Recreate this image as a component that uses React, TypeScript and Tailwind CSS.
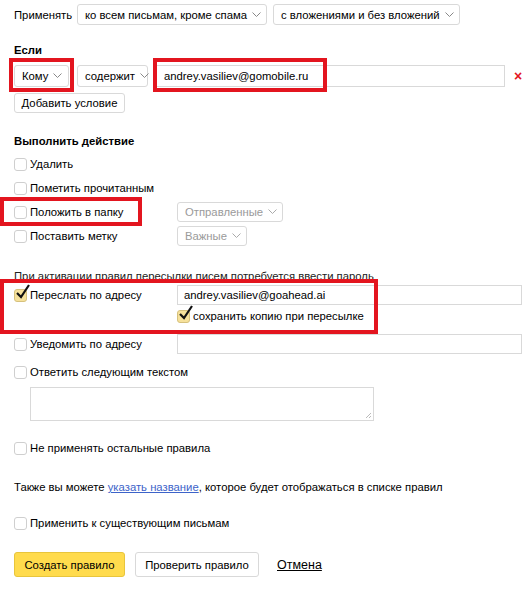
import React from "react";

function Chevron({ gray }: { gray?: boolean }) {
  return (
    <svg width="9" height="6" viewBox="0 0 9 6" className="ml-[5px] shrink-0">
      <polyline points="0.5,0.5 4.5,4.5 8.5,0.5" fill="none" stroke={gray ? "#aaa" : "#888"} strokeWidth="1" />
    </svg>
  );
}

function Select({ label, w, disabled }: { label: string; w: number; disabled?: boolean }) {
  return (
    <div
      className={`flex h-full items-center justify-between rounded-[3px] border border-[#d9d9d9] bg-white pl-[7px] pr-[6px] ${disabled ? "text-[#9a9a9a]" : "text-black"}`}
      style={{ width: w }}
    >
      <span className="whitespace-nowrap">{label}</span>
      <Chevron gray={disabled} />
    </div>
  );
}

function Box({ checked }: { checked?: boolean }) {
  return (
    <span className="relative inline-block h-[13px] w-[13px] shrink-0">
      <span
        className={`absolute inset-0 rounded-[3px] border ${checked ? "border-[#d6c17d] bg-[#f6e19b]" : "border-[#cfcfcf] bg-white"}`}
      />
      {checked && (
        <svg width="16" height="16" viewBox="0 0 16 16" className="absolute left-[1px] top-[-5px]">
          <polyline points="2,9 6,13 14,1" fill="none" stroke="#111" strokeWidth="2.2" strokeLinejoin="miter" />
        </svg>
      )}
    </span>
  );
}

function Check({ label, checked }: { label: string; checked?: boolean }) {
  return (
    <div className="flex items-center gap-[3px]">
      <Box checked={checked} />
      <span className="whitespace-nowrap">{label}</span>
    </div>
  );
}

function RedBox({ l, t, w, h }: { l: number; t: number; w: number; h: number }) {
  return (
    <div
      className="pointer-events-none absolute border-[4px] border-[#e3151f]"
      style={{ left: l, top: t, width: w, height: h }}
    />
  );
}

export default function App() {
  return (
    <div
      className="relative h-[594px] w-[529px] overflow-hidden bg-white pl-[14px] text-[11.3px] leading-[16px] text-black"
      style={{ fontFamily: "'Liberation Sans', Arial, sans-serif" }}
    >
      {/* Применять */}
      <div className="mt-[4px] flex h-[21px] items-center">
        <span className="w-[63px]">Применять</span>
        <Select label="ко всем письмам, кроме спама" w={190} />
        <div className="w-[6px]" />
        <Select label="с вложениями и без вложений" w={187} />
      </div>

      <div className="mt-[17px] font-bold">Если</div>

      {/* condition */}
      <div className="mt-[7px] flex h-[22px] items-center">
        <Select label="Кому" w={55} />
        <div className="w-[8px]" />
        <Select label="содержит" w={71} />
        <div className="w-[7px]" />
        <div className="flex h-full w-[350px] items-center border border-[#d9d9d9] pl-[8px]">
          andrey.vasiliev@gomobile.ru
        </div>
        <span className="ml-[9px] text-[14px] font-bold text-[#e3151f]">×</span>
      </div>

      <button className="mt-[6px] flex h-[20px] w-[111px] items-center justify-center whitespace-nowrap rounded-[3px] border border-[#d9d9d9] bg-white">
        Добавить условие
      </button>

      <div className="mt-[20px] font-bold">Выполнить действие</div>

      <div className="mt-[7px] flex h-[16px] items-center">
        <Check label="Удалить" />
      </div>
      <div className="mt-[8px] flex h-[16px] items-center">
        <Check label="Пометить прочитанным" />
      </div>
      <div className="mt-[6px] flex h-[20px] items-center">
        <div className="w-[163px]">
          <Check label="Положить в папку" />
        </div>
        <Select label="Отправленные" w={106} disabled />
      </div>
      <div className="mt-[4px] flex h-[20px] items-center">
        <div className="w-[163px]">
          <Check label="Поставить метку" />
        </div>
        <Select label="Важные" w={70} disabled />
      </div>

      <div className="mt-[22px] whitespace-nowrap text-[#222]">
        При активации правил пересылки писем потребуется ввести пароль
      </div>

      <div className="mt-[1px] flex h-[20px] items-center">
        <div className="w-[163px]">
          <Check label="Переслать по адресу" checked />
        </div>
        <div className="flex h-full w-[345px] items-center border border-[#d9d9d9] pl-[6px]">
          andrey.vasiliev@goahead.ai
        </div>
      </div>
      <div className="mt-[3px] flex h-[16px] items-center pl-[163px]">
        <Check label="сохранить копию при пересылке" checked />
      </div>

      <div className="mt-[10px] flex h-[20px] items-center">
        <div className="w-[163px]">
          <Check label="Уведомить по адресу" />
        </div>
        <div className="h-full w-[345px] border border-[#d9d9d9]" />
      </div>

      <div className="mt-[10px] flex h-[16px] items-center">
        <Check label="Ответить следующим текстом" />
      </div>
      <div className="relative ml-[16px] mt-[7px] h-[34px] w-[344px] border border-[#d9d9d9]">
        <svg width="7" height="7" viewBox="0 0 7 7" className="absolute bottom-[1px] right-[1px]">
          <line x1="6" y1="1" x2="1" y2="6" stroke="#bbb" />
          <line x1="6" y1="4" x2="4" y2="6" stroke="#bbb" />
        </svg>
      </div>

      <div className="mt-[19px] flex h-[16px] items-center">
        <Check label="Не применять остальные правила" />
      </div>

      <div className="mt-[23px] whitespace-nowrap">
        Также вы можете{" "}
        <span className="text-[#3d63c9] underline decoration-[#3d63c9]">указать название</span>, которое будет
        отображаться в списке правил
      </div>

      <div className="mt-[20px] flex h-[16px] items-center">
        <Check label="Применить к существующим письмам" />
      </div>

      <div className="mt-[21px] flex h-[25px] items-center">
        <button className="flex h-full w-[111px] items-center justify-center whitespace-nowrap rounded-[3px] border border-[#e8c53c] bg-[#ffdb4d]">
          Создать правило
        </button>
        <button className="ml-[10px] flex h-full w-[124px] items-center justify-center whitespace-nowrap rounded-[3px] border border-[#d9d9d9] bg-white">
          Проверить правило
        </button>
        <span className="ml-[18px] text-[12.5px] underline">Отмена</span>
      </div>

      {/* annotation frames */}
      <RedBox l={9} t={58} w={65} h={34} />
      <RedBox l={153} t={58} w={174} h={34} />
      <RedBox l={0} t={197} w={142} h={29} />
      <RedBox l={0} t={279} w={378} h={55} />
    </div>
  );
}
